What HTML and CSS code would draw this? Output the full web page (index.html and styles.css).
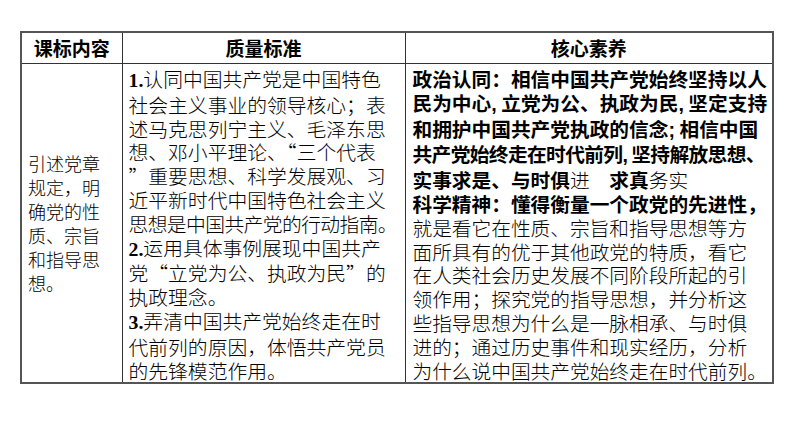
FILE: index.html
```html
<!DOCTYPE html>
<html lang="zh">
<head>
<meta charset="utf-8">
<title>课标内容</title>
<link rel="stylesheet" href="styles.css">
</head>
<body>
<div class="page">
  <table class="std">
    <colgroup>
      <col class="c1">
      <col class="c2">
      <col class="c3">
    </colgroup>
    <thead>
      <tr>
        <th>课标内容</th>
        <th>质量标准</th>
        <th>核心素养</th>
      </tr>
    </thead>
    <tbody>
      <tr>
        <td class="topic">
          <div>引述党章</div>
          <div>规定，明</div>
          <div>确党的性</div>
          <div>质、宗旨</div>
          <div>和指导思</div>
          <div>想。</div>
        </td>
        <td class="quality">
          <div><b class="num">1.</b>认同中国共产党是中国特色</div>
          <div>社会主义事业的领导核心；表</div>
          <div>述马克思列宁主义、毛泽东思</div>
          <div>想、邓小平理论、“三个代表</div>
          <div>”重要思想、科学发展观、习</div>
          <div>近平新时代中国特色社会主义</div>
          <div class="tight">思想是中国共产党的行动指南。</div>
          <div><b class="num">2.</b>运用具体事例展现中国共产</div>
          <div>党“立党为公、执政为民”的</div>
          <div>执政理念。</div>
          <div><b class="num">3.</b>弄清中国共产党始终走在时</div>
          <div>代前列的原因，体悟共产党员</div>
          <div>的先锋模范作用。</div>
        </td>
        <td class="core">
          <div class="strong">政治认同：相信中国共产党始终坚持以人</div>
          <div class="strong">民为中心<span class="cm">,</span> 立党为公、执政为民<span class="cm">,</span> 坚定支持</div>
          <div class="strong">和拥护中国共产党执政的信念<span class="cm">;</span> 相信中国</div>
          <div class="strong tight">共产党始终走在时代前列<span class="cm">,</span> 坚持解放思想、</div>
          <div class="strong">实事求是、与时俱<span class="thin">进</span>　求真<span class="thin">务实</span></div>
          <div class="strong">科学精神：懂得衡量一个政党的先进性，</div>
          <div>就是看它在性质、宗旨和指导思想等方</div>
          <div>面所具有的优于其他政党的特质，看它</div>
          <div>在人类社会历史发展不同阶段所起的引</div>
          <div>领作用；探究党的指导思想，并分析这</div>
          <div>些指导思想为什么是一脉相承、与时俱</div>
          <div>进的；通过历史事件和现实经历，分析</div>
          <div>为什么说中国共产党始终走在时代前列。</div>
        </td>
      </tr>
    </tbody>
  </table>
</div>
</body>
</html>
```

FILE: styles.css
```css
html, body {
  margin: 0;
  padding: 0;
  background: #fff;
}

.page {
  padding: 31px 0 0 20px;
  font-family: "Noto Sans CJK SC", "Noto Sans", sans-serif;
  color: #000;
}

.std {
  border-collapse: collapse;
  table-layout: fixed;
  width: 752px;
  border: 2px solid #555;
}

.c1 { width: 101px; }
.c2 { width: 283px; }
.c3 { width: 368px; }

.std th,
.std td {
  border: 1px solid #333;
  padding: 0;
}

.std th {
  height: 30px;
  font-size: 19px;
  font-weight: 700;
  line-height: 30px;
  text-align: center;
}

.std td {
  height: 312px;
  vertical-align: top;
  font-weight: 300;
}

.std td div {
  white-space: nowrap;
}

.topic {
  vertical-align: middle !important;
  padding-left: 6px !important;
  font-size: 18px;
  line-height: 24px;
}

.quality {
  padding: 3px 0 0 6px !important;
  font-size: 19.8px;
  line-height: 23.8px;
}

.core {
  padding: 3px 0 0 7px !important;
  font-size: 19.7px;
  line-height: 23.8px;
}

.num {
  font-family: "Liberation Serif", serif;
  font-weight: 700;
}

.strong {
  font-weight: 700;
}

.thin {
  font-weight: 300;
}

.cm {
  font-family: "Liberation Sans", sans-serif;
}

.tight {
  letter-spacing: -0.6px;
}
```
